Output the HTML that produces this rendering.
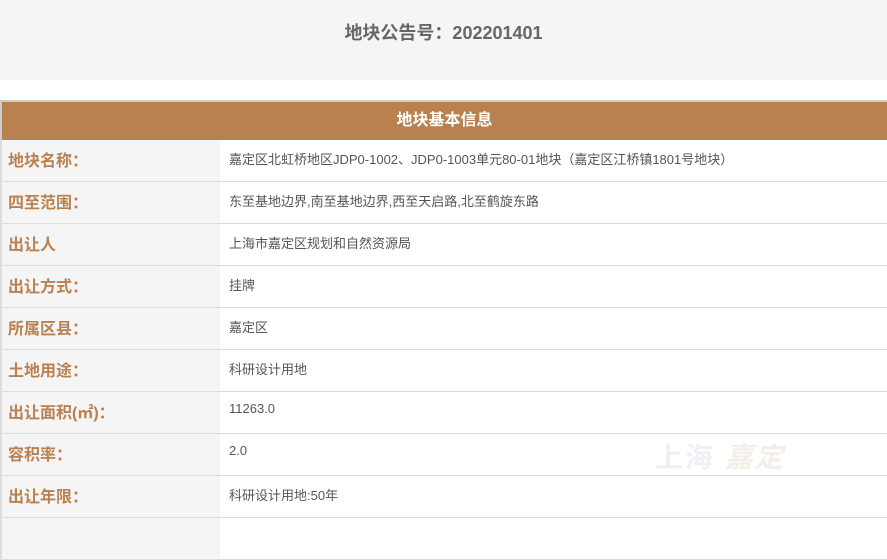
<!DOCTYPE html>
<html><head><meta charset="utf-8"><style>
body{margin:0;width:887px;height:524px;overflow:hidden;background:#fff;font-family:"Liberation Sans","Noto Sans CJK SC",sans-serif;position:relative;}
.top{height:80px;background:#f5f5f5;text-align:center;font-size:18px;font-weight:bold;color:#666;line-height:66px;}
.hd{position:absolute;top:100px;left:0;width:887px;height:40px;box-sizing:border-box;border-top:2px solid #ccc;border-left:2px solid #ccc;background:#b98150;color:#fff;font-size:16px;font-weight:bold;text-align:center;line-height:38px;}
.r{position:absolute;left:0;width:887px;height:42px;box-sizing:border-box;border-bottom:1px solid #ddd;}
.l{position:absolute;left:0;top:0;width:220px;height:41px;box-sizing:border-box;background:#f5f5f5;border-left:2px solid #ddd;color:#b98150;font-weight:bold;font-size:16px;padding-left:6px;line-height:44px;}
.v{position:absolute;left:229px;top:9px;font-size:13px;color:#555;}
</style></head><body>
<div class="top">地块公告号：202201401</div>
<div class="hd">地块基本信息</div>
<div class="r" style="top:140px"><div class="l">地块名称：</div><div class="v">嘉定区北虹桥地区JDP0-1002、JDP0-1003单元80-01地块（嘉定区江桥镇1801号地块）</div></div>
<div class="r" style="top:182px"><div class="l">四至范围：</div><div class="v">东至基地边界,南至基地边界,西至天启路,北至鹤旋东路</div></div>
<div class="r" style="top:224px"><div class="l">出让人</div><div class="v">上海市嘉定区规划和自然资源局</div></div>
<div class="r" style="top:266px"><div class="l">出让方式：</div><div class="v">挂牌</div></div>
<div class="r" style="top:308px"><div class="l">所属区县：</div><div class="v">嘉定区</div></div>
<div class="r" style="top:350px"><div class="l">土地用途：</div><div class="v">科研设计用地</div></div>
<div class="r" style="top:392px"><div class="l">出让面积(㎡)：</div><div class="v">11263.0</div></div>
<div class="r" style="top:434px"><div class="l">容积率：</div><div class="v">2.0</div></div>
<div class="r" style="top:476px"><div class="l">出让年限：</div><div class="v">科研设计用地:50年</div></div>
<div class="r" style="top:518px"><div class="l"></div></div>
<div style="position:absolute;left:655px;top:436px;font-size:28px;font-weight:bold;color:#eef1f4;letter-spacing:2px">上海 <span style="color:#f3eee8;font-style:italic">嘉定</span></div>
</body></html>
